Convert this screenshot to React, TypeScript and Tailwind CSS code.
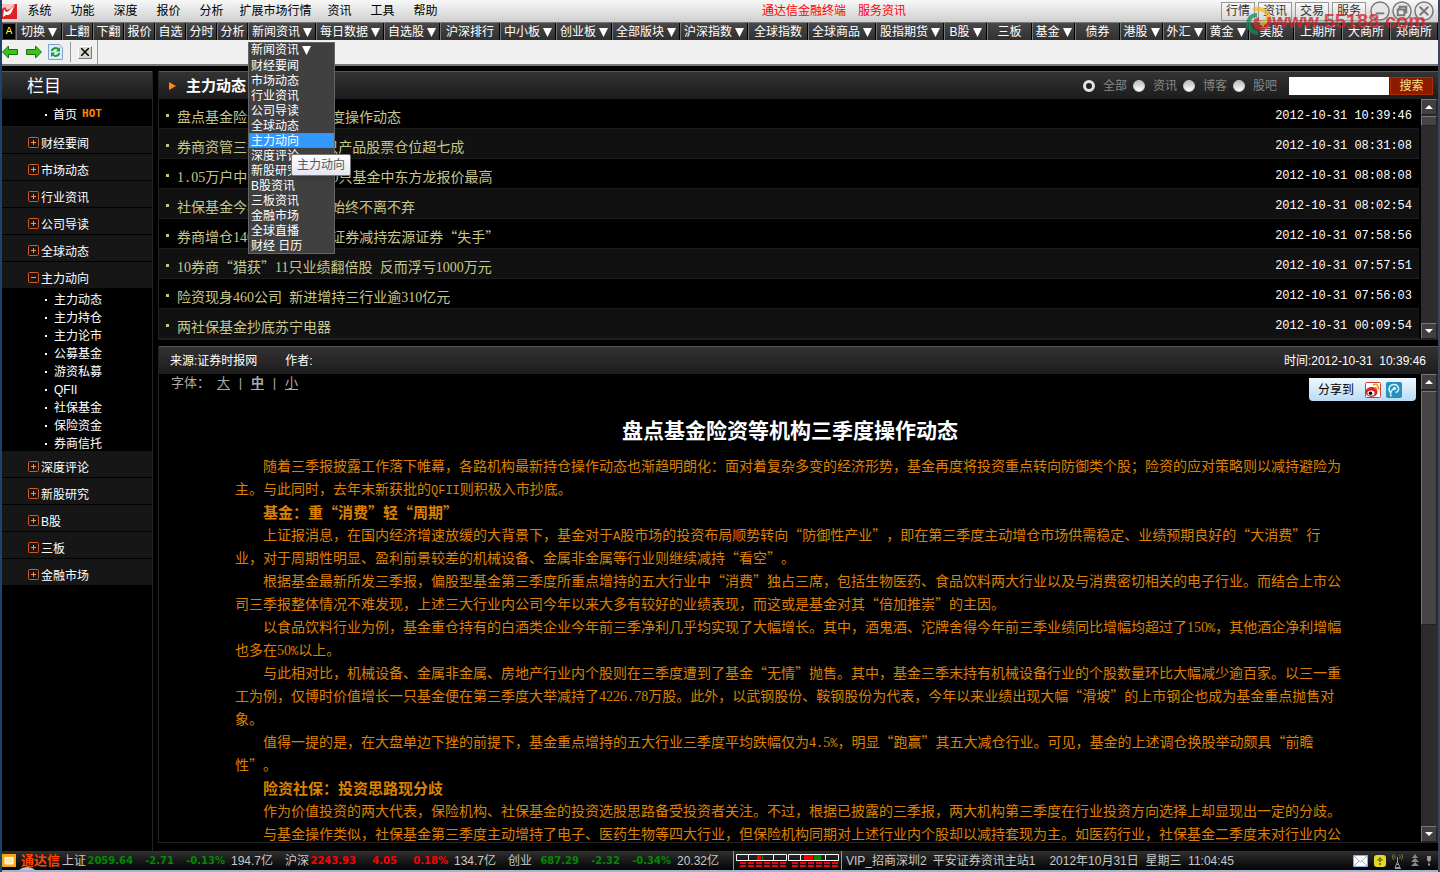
import React, { useState } from 'react';

interface NavItem {
  label: string;
  width: string;
  menu?: boolean;
}

const menus = ['系统', '功能', '深度', '报价', '分析', '扩展市场行情', '资讯', '工具', '帮助'];

const navItems: NavItem[] = [
  { label: '切换', width: 'w-[46px]', menu: true },
  { label: '上翻', width: 'w-[31px]' },
  { label: '下翻', width: 'w-[31px]' },
  { label: '报价', width: 'w-[31px]' },
  { label: '自选', width: 'w-[31px]' },
  { label: '分时', width: 'w-[31px]' },
  { label: '分析', width: 'w-[31px]' },
  { label: '新闻资讯', width: 'w-[68px]', menu: true },
  { label: '每日数据', width: 'w-[68px]', menu: true },
  { label: '自选股', width: 'w-[56px]', menu: true },
  { label: '沪深排行', width: 'w-[60px]' },
  { label: '中小板', width: 'w-[56px]', menu: true },
  { label: '创业板', width: 'w-[56px]', menu: true },
  { label: '全部版块', width: 'w-[68px]', menu: true },
  { label: '沪深指数', width: 'w-[68px]', menu: true },
  { label: '全球指数', width: 'w-[60px]' },
  { label: '全球商品', width: 'w-[68px]', menu: true },
  { label: '股指期货', width: 'w-[68px]', menu: true },
  { label: 'B股', width: 'w-[43px]', menu: true },
  { label: '三板', width: 'w-[45px]' },
  { label: '基金', width: 'w-[43px]', menu: true },
  { label: '债券', width: 'w-[45px]' },
  { label: '港股', width: 'w-[43px]', menu: true },
  { label: '外汇', width: 'w-[43px]', menu: true },
  { label: '黄金', width: 'w-[43px]', menu: true },
  { label: '美股', width: 'w-[45px]' },
  { label: '上期所', width: 'w-[48px]' },
  { label: '大商所', width: 'w-[48px]' },
  { label: '郑商所', width: 'w-[48px]' },
];

const newsMenu = [
  '财经要闻', '市场动态', '行业资讯', '公司导读', '全球动态', '主力动向', '深度评论',
  '新股研究', 'B股资讯', '三板资讯', '金融市场', '全球直播', '财经 日历',
];

const categories = [
  '财经要闻', '市场动态', '行业资讯', '公司导读', '全球动态', '主力动向',
  '深度评论', '新股研究', 'B股', '三板', '金融市场',
];

const subCategories = [
  '主力动态', '主力持仓', '主力论市', '公募基金', '游资私募', 'QFII', '社保基金', '保险资金', '券商信托',
];

const newsList = [
  { title: '盘点基金险资等机构三季度操作动态', time: '2012-10-31 10:39:46' },
  { title: '券商资管三季度末揭底 只产品股票仓位超七成', time: '2012-10-31 08:31:08' },
  { title: '1.05万户中签配售率 近50只基金中东方龙报价最高', time: '2012-10-31 08:08:08' },
  { title: '社保基金今年坚守银行股始终不离不弃', time: '2012-10-31 08:02:54' },
  { title: '券商增仓140只个股 中信证券减持宏源证券“失手”', time: '2012-10-31 07:58:56' },
  { title: '10券商“猎获”11只业绩翻倍股 反而浮亏1000万元', time: '2012-10-31 07:57:51' },
  { title: '险资现身460公司 新进增持三行业逾310亿元', time: '2012-10-31 07:56:03' },
  { title: '两社保基金抄底苏宁电器', time: '2012-10-31 00:09:54' },
];

const article = [
  { text: '随着三季报披露工作落下帷幕，各路机构最新持仓操作动态也渐趋明朗化：面对着复杂多变的经济形势，基金再度将投资重点转向防御类个股；险资的应对策略则以减持避险为主。与此同时，去年末新获批的QFII则积极入市抄底。' },
  { heading: true, text: '基金：重“消费”轻“周期”' },
  { text: '上证报消息，在国内经济增速放缓的大背景下，基金对于A股市场的投资布局顺势转向“防御性产业”，即在第三季度主动增仓市场供需稳定、业绩预期良好的“大消费”行业，对于周期性明显、盈利前景较差的机械设备、金属非金属等行业则继续减持“看空”。' },
  { text: '根据基金最新所发三季报，偏股型基金第三季度所重点增持的五大行业中“消费”独占三席，包括生物医药、食品饮料两大行业以及与消费密切相关的电子行业。而结合上市公司三季报整体情况不难发现，上述三大行业内公司今年以来大多有较好的业绩表现，而这或是基金对其“倍加推崇”的主因。' },
  { text: '以食品饮料行业为例，基金重仓持有的白酒类企业今年前三季净利几乎均实现了大幅增长。其中，酒鬼酒、沱牌舍得今年前三季业绩同比增幅均超过了150%，其他酒企净利增幅也多在50%以上。' },
  { text: '与此相对比，机械设备、金属非金属、房地产行业内个股则在三季度遭到了基金“无情”抛售。其中，基金三季末持有机械设备行业的个股数量环比大幅减少逾百家。以三一重工为例，仅博时价值增长一只基金便在第三季度大举减持了4226.78万股。此外，以武钢股份、鞍钢股份为代表，今年以来业绩出现大幅“滑坡”的上市钢企也成为基金重点抛售对象。' },
  { text: '值得一提的是，在大盘单边下挫的前提下，基金重点增持的五大行业三季度平均跌幅仅为4.5%，明显“跑赢”其五大减仓行业。可见，基金的上述调仓换股举动颇具“前瞻性”。' },
  { heading: true, text: '险资社保：投资思路现分歧' },
  { text: '作为价值投资的两大代表，保险机构、社保基金的投资选股思路备受投资者关注。不过，根据已披露的三季报，两大机构第三季度在行业投资方向选择上却显现出一定的分歧。' },
  { text: '与基金操作类似，社保基金第三季度主动增持了电子、医药生物等四大行业，但保险机构同期对上述行业内个股却以减持套现为主。如医药行业，社保基金二季度末对行业内公' },
];

const indices = [
  { name: '上证', price: '2059.64', change: '-2.71', pct: '-0.13%', volume: '194.7亿', color: 'text-[#008a00]' },
  { name: '沪深', price: '2243.93', change: '4.05', pct: '0.18%', volume: '134.7亿', color: 'text-[#ff0000]' },
  { name: '创业', price: '687.29', change: '-2.32', pct: '-0.34%', volume: '20.32亿', color: 'text-[#008a00]' },
];

// Digits and latin runs take half the width of a Chinese character
const MixedText: React.FC<{ text: string }> = ({ text }) => (
  <>
    {text.split(/([A-Za-z%.\s]+|\d+)/).map((part, i) => {
      if (i % 2 === 0) return part;
      return /\d/.test(part) ? (
        <span key={i} className="font-['Liberation_Serif',serif] text-[14px] leading-none">{part}</span>
      ) : (
        <span key={i} className="font-['Liberation_Mono',monospace] text-[12px] leading-none">{part}</span>
      );
    })}
  </>
);

const DownTriangle: React.FC = () => (
  <svg viewBox="0 0 9 9" className="h-[9px] w-[9px] shrink-0">
    <path d="M0 0h9L4.5 9z" fill="#fff" />
  </svg>
);

const ScrollButton: React.FC<{ direction: 'up' | 'down' }> = ({ direction }) => (
  <button
    type="button"
    aria-label={direction === 'up' ? '向上滚动' : '向下滚动'}
    className="flex h-4 w-4 shrink-0 items-center justify-center border border-[#222] border-l-[#777] border-t-[#777] bg-[#404040]"
  >
    <svg viewBox="0 0 8 4" className="h-1 w-2">
      <path d={direction === 'up' ? 'M0 4L4 0l4 4z' : 'M0 0h8L4 4z'} fill="#fff" />
    </svg>
  </button>
);

const ScrollBar: React.FC<{ thumb: string }> = ({ thumb }) => (
  <div className="flex w-[17px] shrink-0 flex-col bg-[#2c2c2c]">
    <ScrollButton direction="up" />
    <div className={`mt-px w-4 border border-[#222] border-l-[#777] border-t-[#777] bg-[#454545] ${thumb}`}></div>
    <div className="flex-1"></div>
    <ScrollButton direction="down" />
  </div>
);

const Watermark: React.FC = () => (
  <div className="pointer-events-none absolute right-3 top-[7px] z-30 flex items-center opacity-75">
    <svg viewBox="0 0 26 28" className="h-7 w-[26px]" fill="none" strokeWidth="4">
      <path d="M7 3c8-3 15 1 15 7 0 5-4 7-8 6" stroke="#f3b81c" />
      <path d="M11 8C2 8 0 18 5 23c2 2 4 3 7 3" stroke="#168a55" />
      <path d="M23 10c2 8-4 13-10 11-5-2-4-8 0-9" stroke="#d8252b" />
    </svg>
    <span className="font-['Liberation_Sans',sans-serif] text-[20px] font-bold leading-7 text-[#d42027]">www.55188.com</span>
  </div>
);

const MenuBar: React.FC = () => (
  <header className="relative flex h-[23px] shrink-0 items-center border-b border-[#777] bg-linear-to-b from-[#f8f8f8] to-[#cfcfcf] text-black">
    <svg viewBox="0 0 15 15" className="h-[15px] w-[15px]">
      <path d="M0 0h15v15H0z" fill="#dc2222" />
      <path d="M0 0h13L8 5 5 6 3 3 0 5z" fill="#f3c4c4" />
      <path d="M2 5l2 3c3 0 4-3 9-7-2 3-2 5-4 8-1 2-3 2-5 2l-3 2z" fill="#fff" />
    </svg>
    <nav className="ml-px flex">
      {menus.map(item => (
        <button
          key={item}
          type="button"
          className={`leading-[22px] ${item.length > 2 ? 'w-[85px]' : 'w-[43px]'}`}
        >
          {item}
        </button>
      ))}
    </nav>
    <div className="flex flex-1 justify-center gap-3 text-[#ff0000]">
      <span>通达信金融终端</span>
      <span>服务资讯</span>
    </div>
    <div className="flex gap-[3px]">
      {['行情', '资讯', '交易', '服务'].map(item => (
        <button
          key={item}
          type="button"
          className="h-[19px] w-[34px] border border-[#999] bg-linear-to-b from-[#f8f8f8] to-[#d8d8d8] leading-[17px] text-[#333]"
        >
          {item}
        </button>
      ))}
    </div>
    <div className="ml-1 mr-1 flex gap-[2px]">
      {['M6 13h9', 'M8 8V6h7v6h-2M6 9h7v6H6z', 'M6 6l9 9M15 6l-9 9'].map((d, i) => (
        <button key={d} type="button" aria-label={['最小化', '还原', '关闭'][i]} className="h-5 w-5">
          <svg viewBox="0 0 21 21" fill="none" stroke="#777" strokeWidth="2">
            <circle cx="10.500" cy="10.500" r="9.500" fill="#e6e6e6" strokeWidth="1.500" />
            <path d={d} />
          </svg>
        </button>
      ))}
    </div>
    <Watermark />
  </header>
);

const NewsDropdown: React.FC<{ active: string; onSelect: (item: string) => void }> = ({ active, onSelect }) => (
  <div className="absolute left-0 top-[19px] z-20 w-[87px] border border-[#666] bg-[#404040] text-white">
    <div className="flex h-[15px] items-center gap-[3px] px-[2px] leading-[17px]">
      新闻资讯
      <DownTriangle />
    </div>
    {newsMenu.map(item => (
      <button
        key={item}
        type="button"
        onClick={() => onSelect(item)}
        className={`block h-[15px] w-full whitespace-nowrap px-[2px] text-left leading-[17px] ${
          item === active ? 'bg-[#3399ff] outline-1 -outline-offset-1 outline-dotted outline-[#cc6600]' : ''
        }`}
      >
        {item}
      </button>
    ))}
    <div
      role="tooltip"
      className="absolute left-[42px] top-[111px] h-[22px] w-[60px] rounded-[2px] border border-[#767676] bg-linear-to-b from-white to-[#e4e5f0] text-center leading-5 text-[#575757] shadow-md"
    >
      {active}
    </div>
  </div>
);

const NavBar: React.FC = () => {
  const [active, setActive] = useState('主力动向');

  return (
    <nav className="flex h-[17px] shrink-0 bg-[#111] text-white">
      <button type="button" className="w-[15px] border border-[#444] bg-black font-['Liberation_Mono',monospace] text-[11px] leading-[15px] text-[#ffff00]">
        A
      </button>
      {navItems.map(item => (
        <div key={item.label} className={`relative shrink-0 ${item.width}`}>
          <button
            type="button"
            className="flex h-[17px] w-full items-center justify-center gap-[3px] border-r border-l border-r-black border-l-[#777] bg-linear-to-b from-[#484848] to-[#303030] pt-[2px] leading-[17px]"
          >
            {item.label}
            {item.menu && <DownTriangle />}
          </button>
          {item.label === '新闻资讯' && <NewsDropdown active={active} onSelect={setActive} />}
        </div>
      ))}
    </nav>
  );
};

const ToolBar: React.FC = () => (
  <div className="flex h-[26px] shrink-0 items-center border-b-2 border-[#777] bg-[#f0f0f0]">
    <button type="button" aria-label="后退">
      <svg viewBox="0 0 16 14" className="h-[14px] w-4">
        <path d="M.5 7l6-6v3.500h9v5h-9V13z" fill="#3cc21c" stroke="#187008" />
      </svg>
    </button>
    <button type="button" aria-label="前进" className="ml-2">
      <svg viewBox="0 0 16 14" className="h-[14px] w-4">
        <path d="M15.500 7l-6-6v3.500h-9v5h9V13z" fill="#3cc21c" stroke="#187008" />
      </svg>
    </button>
    <button type="button" aria-label="刷新" className="ml-[6px]">
      <svg viewBox="0 0 15 16" className="h-4 w-[15px]">
        <path d="M.5.5h11l3 3v12H.5z" fill="#dcecfb" stroke="#7f9fcf" />
        <path d="M3.500 7c1-3 5-4 7-1.500M11.500 9c-1 3-5 4-7 1.500" fill="none" stroke="#189a28" strokeWidth="2" />
        <path d="M12 3v4.500H8zM3 13V8.500h4z" fill="#189a28" />
      </svg>
    </button>
    <div className="mx-[7px] h-5 w-px bg-[#999]"></div>
    <button
      type="button"
      aria-label="关闭"
      className="flex h-[13px] w-[14px] items-center justify-center border border-[#777] border-l-white border-t-white bg-[#d8d5cc]"
    >
      <svg viewBox="0 0 8 8" className="h-2 w-2" stroke="#000" strokeWidth="1.500">
        <path d="M0 0l8 8M8 0L0 8" />
      </svg>
    </button>
    <div className="ml-[5px] h-full w-px bg-[#999]"></div>
  </div>
);

const ToggleBox: React.FC<{ open: boolean }> = ({ open }) => (
  <svg viewBox="0 0 11 11" className="h-[11px] w-[11px]" fill="none">
    <rect x=".5" y=".5" width="10" height="10" rx="1" stroke="#d85a1a" />
    <path d={open ? 'M3 5.500h5' : 'M3 5.500h5M5.500 3v5'} stroke="#ff9440" />
  </svg>
);

const Sidebar: React.FC = () => {
  const [open, setOpen] = useState('主力动向');

  return (
    <aside className="w-[151px] shrink-0 border-r border-[#222] text-white">
      <h2 className="h-7 border-t border-[#555] bg-linear-to-b from-[#333] to-[#1c1c1c] pl-[25px] pt-px text-[17px] leading-[28px]">
        栏目
      </h2>
      <a href="#home" className="flex h-7 items-center border-b border-[#1c1c1c] pl-[43px] pt-1">
        <span className="h-[2px] w-[2px] bg-white"></span>
        <span className="ml-[6px]">首页</span>
        <span className="ml-[5px] font-['DejaVu_Sans_Mono',monospace] text-[11px] font-bold text-[#ff8a00]">HOT</span>
      </a>
      {categories.map(item => (
        <div key={item}>
          <button
            type="button"
            onClick={() => setOpen(item === open ? '' : item)}
            className="flex h-[27px] w-full items-center gap-[2px] border-b border-black bg-[#161616] pl-[26px] pt-1"
          >
            <ToggleBox open={item === open} />
            <span className="pt-[3px]">{item}</span>
          </button>
          {item === open && (
            <ul>
              {subCategories.map(sub => (
                <li key={sub}>
                  <a href="#list" className="flex h-[18px] items-center gap-[7px] pl-[43px] pt-1 leading-[18px]">
                    <span className="h-[2px] w-[2px] bg-white"></span>
                    {sub}
                  </a>
                </li>
              ))}
            </ul>
          )}
        </div>
      ))}
    </aside>
  );
};

const SearchForm: React.FC = () => {
  const [scope, setScope] = useState('全部');

  return (
    <form className="flex items-center" onSubmit={e => e.preventDefault()}>
      {['全部', '资讯', '博客', '股吧'].map(item => (
        <label key={item} className="flex w-[50px] items-center gap-2 text-[#888]">
          <input
            type="radio"
            name="scope"
            value={item}
            checked={scope === item}
            onChange={() => setScope(item)}
            className="h-3 w-3 appearance-none rounded-full border border-[#ccc] bg-linear-to-b from-[#bbb] to-white checked:border-[3px] checked:border-[#e4e4e4] checked:bg-[#222] checked:bg-none"
          />
          {item}
        </label>
      ))}
      <input type="text" aria-label="关键字" className="ml-[6px] h-[18px] w-[100px] bg-white px-1 text-black" />
      <button type="submit" className="ml-px h-[18px] w-[43px] border border-[#a83000] bg-[#8c1c00] leading-4 text-[#ffe08a]">
        搜索
      </button>
    </form>
  );
};

const NewsPanel: React.FC = () => (
  <section className="shrink-0 border-b border-l border-[#222]">
    <div className="flex h-7 items-center border-t border-[#555] bg-linear-to-b from-[#333] to-[#1c1c1c] pl-[10px] pr-[5px]">
      <svg viewBox="0 0 7 8" className="h-2 w-[7px]">
        <path d="M0 0l7 4-7 4z" fill="#ff8a00" />
      </svg>
      <h1 className="ml-[10px] flex-1 text-[15px] font-bold leading-7 text-white">主力动态</h1>
      <SearchForm />
    </div>
    <div className="flex">
      <ul className="mr-[2px] flex-1">
        {newsList.map(item => (
          <li key={item.title} className="flex h-[30px] items-center border-b border-[#1c1c1c] pl-[7px] pr-[7px] pt-1 even:bg-[#111]">
            <span className="h-[3px] w-[3px] bg-[#c8c080]"></span>
            <a
              href="#article"
              className="ml-2 flex-1 whitespace-pre font-['Noto_Sans_CJK_SC',sans-serif] text-[14px] leading-5 text-[#c6c68c] [text-spacing-trim:space-all]"
            >
              <MixedText text={item.title} />
            </a>
            <time className="font-['Liberation_Mono',monospace] text-[12px] text-white">{item.time}</time>
          </li>
        ))}
      </ul>
      <ScrollBar thumb="h-[10px]" />
    </div>
  </section>
);

const ShareBox: React.FC = () => (
  <div className="absolute right-[5px] top-1 flex h-[23px] w-[107px] items-center rounded-b bg-linear-to-b from-[#eef8ff] to-[#b8dcf4] pl-[9px] text-black">
    <span className="flex-1">分享到</span>
    <a href="#weibo" aria-label="新浪微博">
      <svg viewBox="0 0 16 16" className="h-4 w-4">
        <rect x=".5" y=".5" width="15" height="15" rx="1" fill="#fff" stroke="#d83c2c" />
        <ellipse cx="6.500" cy="10" rx="6" ry="5" fill="#d8232b" />
        <ellipse cx="6" cy="11" rx="3.500" ry="2.600" fill="#fff" />
        <circle cx="5.500" cy="11.300" r="1.800" fill="#000" />
        <path d="M8 3c4-2 6 1 5.500 5M9.500 5.500c1.500-.3 2 .5 2 2" fill="none" stroke="#f09020" strokeWidth="1.500" />
      </svg>
    </a>
    <a href="#tweibo" aria-label="腾讯微博" className="ml-[5px] mr-[14px]">
      <svg viewBox="0 0 16 16" className="h-4 w-4">
        <rect width="16" height="16" rx="2" fill="#2592bd" />
        <path d="M5 14.500c-1-3 0-6 3-8M5 11C1.500 8 3 2.500 8 2.500s6.500 7 1.500 8" fill="none" stroke="#d9f1fb" strokeWidth="1.500" />
        <circle cx="8.500" cy="6.500" r="1.700" fill="#d9f1fb" />
      </svg>
    </a>
  </div>
);

const ArticlePanel: React.FC = () => (
  <section className="mt-[6px] flex min-h-0 flex-1 flex-col border-b border-l border-[#222]">
    <div className="flex h-7 shrink-0 items-center border-t border-[#555] bg-linear-to-b from-[#333] to-[#1c1c1c] pl-[11px] pr-3 text-white">
      <span>来源:证券时报网</span>
      <span className="ml-7 flex-1">作者:</span>
      <time>时间:2012-10-31&nbsp; 10:39:46</time>
    </div>
    <div className="flex min-h-0 flex-1">
      <div className="relative min-w-0 flex-1 overflow-hidden">
        <div className="flex h-[18px] items-center pl-3 text-[13px] leading-[18px] text-[#aaa]">
          <span className="w-[46px]">字体：</span>
          <a href="#large" className="underline underline-offset-2">大</a>
          <span className="w-[21px] text-center">|</span>
          <a href="#medium" className="font-bold underline underline-offset-2">中</a>
          <span className="w-[21px] text-center">|</span>
          <a href="#small" className="underline underline-offset-2">小</a>
        </div>
        <ShareBox />
        <article className="px-[76px] font-['Noto_Sans_CJK_SC',sans-serif] text-[14px] leading-[23px] text-[#dc8200] [text-spacing-trim:space-all]">
          <h1 className="mb-[10px] mt-[22px] text-center text-[21px] font-bold leading-[30px] text-white">
            盘点基金险资等机构三季度操作动态
          </h1>
          {article.map(block =>
            block.heading ? (
              <h2 key={block.text} className="indent-7 text-[15px] font-bold leading-[23px]">{block.text}</h2>
            ) : (
              <p key={block.text} className="indent-7">
                <MixedText text={block.text} />
              </p>
            )
          )}
        </article>
      </div>
      <ScrollBar thumb="h-1/2" />
    </div>
  </section>
);

const Meter: React.FC<{ red: number; green: number; at: number }> = ({ red, green, at }) => (
  <svg viewBox="0 0 51 14" className="h-[14px] w-[51px]">
    <path d="M.5.500h50v6H.5zM12.500 0v7M37.500 0v7" fill="none" stroke="#fff" />
    <rect x={at} y="1" width={red} height="5" fill="#f00" />
    <rect x={at + red + 1} y="1" width={green} height="5" fill="#008a00" />
    <path d="M4 9h47M4 12h47" stroke="#f00" strokeWidth="2" strokeDasharray="6 2" />
  </svg>
);

const StatusBar: React.FC = () => (
  <footer className="relative flex h-[21px] shrink-0 items-center overflow-hidden border-b-2 border-[#9db8d0] bg-linear-to-b from-[#303030] to-[#050505] text-[#c8c8c8]">
    <svg viewBox="0 0 14 13" className="h-[13px] w-[14px]">
      <rect width="14" height="13" fill="#f6a81c" />
      <path d="M3 3.500h8v6.500H3z" fill="#fce9b0" stroke="#fff" />
    </svg>
    <span className="ml-[5px] w-[41px] text-[13px] font-bold leading-4 text-[#ff4500]">通达信</span>
    {indices.map(item => (
      <div key={item.name} className="flex w-[223px] shrink-0 items-center leading-4">
        <span className="w-[25px]">{item.name}</span>
        <span className={`flex font-['DejaVu_Sans',sans-serif] text-[10px] font-bold ${item.color}`}>
          <span className="w-[46px] text-right">{item.price}</span>
          <span className="w-[41px] text-right">{item.change}</span>
          <span className="w-[51px] text-right">{item.pct}</span>
        </span>
        <span className="pl-[6px]">{item.volume}</span>
      </div>
    ))}
    <div className="ml-[2px] flex h-full items-center gap-px border-l border-r border-[#999] px-[2px]">
      <Meter at={21} red={4} green={1} />
      <Meter at={16} red={9} green={7} />
    </div>
    <span className="ml-1">VIP_招商深圳2</span>
    <span className="ml-[6px]">平安证券资讯主站1</span>
    <span className="ml-[14px] flex-1 whitespace-pre">2012年10月31日  星期三  11:04:45</span>
    <div className="flex items-center gap-[6px] pr-[7px]">
      <svg viewBox="0 0 15 12" className="h-3 w-[15px]">
        <path d="M.5.500h14v11H.5z" fill="#fff" stroke="#8ab0dc" />
        <path d="M1 1l6.500 6L14 1M1 11l5-5M14 11L9 6" fill="none" stroke="#8ab0dc" />
      </svg>
      <svg viewBox="0 0 12 12" className="h-3 w-3">
        <rect width="12" height="12" rx="3" fill="#e0d82c" />
        <path d="M6 2L2.500 5.500H5V7h2V5.500h2.500zM5 8h2v2H5z" fill="#807800" />
      </svg>
      <svg viewBox="0 0 11 16" className="h-4 w-[11px]" fill="none" stroke="#999">
        <path d="M2 1C0 3 0 5 2 7M9 1c2 2 2 4 0 6M3.500 2.500c-1 1-1 2 0 3M7.500 2.500c1 1 1 2 0 3" stroke="#8a8a30" />
        <path d="M5.500 4v5L3 14.500h5L5.500 9M3 15.500h6M4 11.500h3" />
      </svg>
      <svg viewBox="0 0 8 13" className="ml-[2px] h-[13px] w-2" fill="#888">
        <path d="M4 0l3 4H1zM4 4l4 4H0zM4 8l4 4H0z" />
      </svg>
      <svg viewBox="0 0 4 10" className="ml-[2px] h-[10px] w-1" fill="#999">
        <path d="M0 0h4v4L2 6.500 0 4zM1 7.500h2v2H1z" />
      </svg>
    </div>
    {/* top of the start button behind the window */}
    <div className="absolute left-3 top-4 h-[26px] w-[26px] rounded-full bg-[#b4cadb]"></div>
  </footer>
);

const App: React.FC = () => (
  <div className="flex h-screen w-full flex-col overflow-hidden border-l-2 border-r-2 border-l-[#1b4468] border-r-[#3c4656] bg-black font-['Liberation_Sans','Noto_Sans_CJK_SC',sans-serif] text-[12px]">
    <MenuBar />
    <NavBar />
    <ToolBar />
    <div className="flex min-h-0 flex-1 gap-[5px] pt-[5px]">
      <Sidebar />
      <main className="flex min-w-0 flex-1 flex-col pb-2">
        <NewsPanel />
        <ArticlePanel />
      </main>
    </div>
    <StatusBar />
  </div>
);

export default App;
